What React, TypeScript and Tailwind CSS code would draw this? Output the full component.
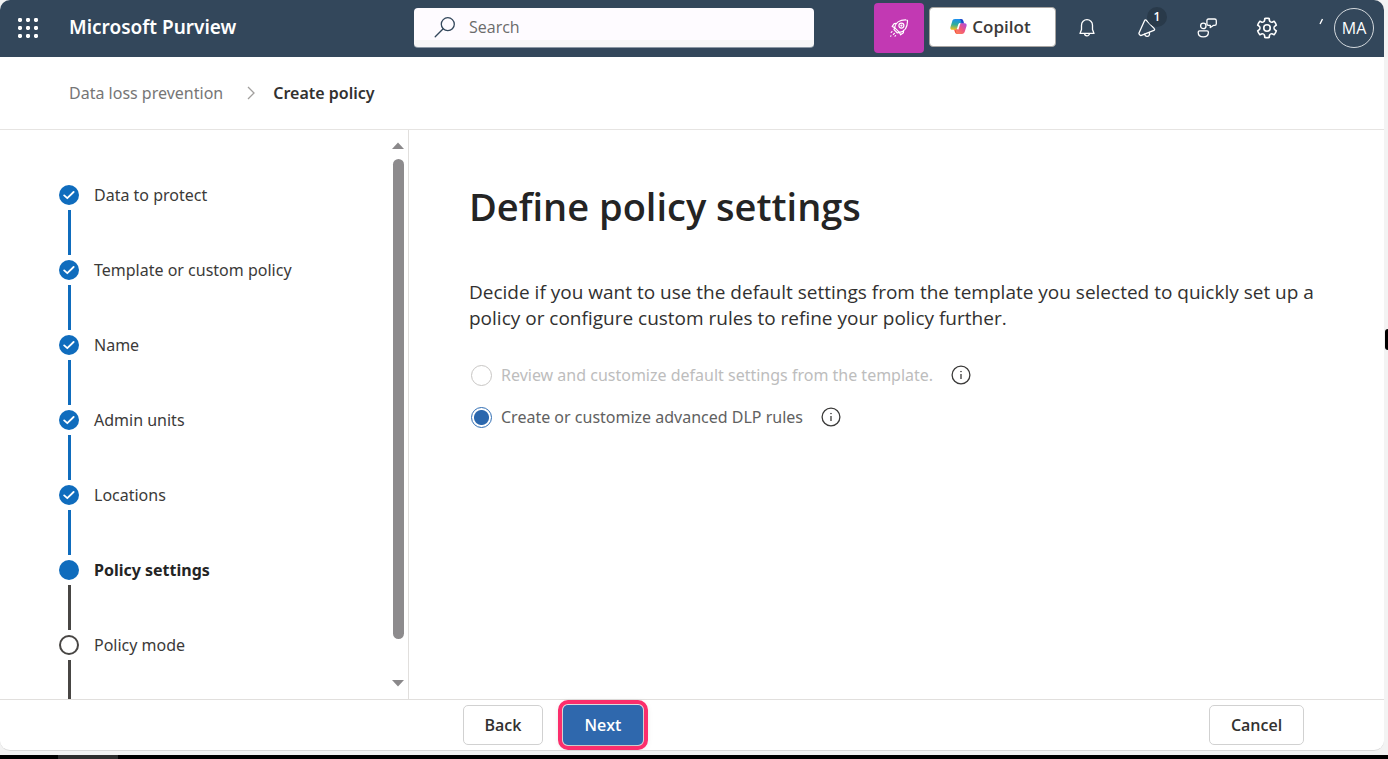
import React from "react";

type StepState = "done" | "current" | "pending";

const steps: { label: string; state: StepState }[] = [
  { label: "Data to protect", state: "done" },
  { label: "Template or custom policy", state: "done" },
  { label: "Name", state: "done" },
  { label: "Admin units", state: "done" },
  { label: "Locations", state: "done" },
  { label: "Policy settings", state: "current" },
  { label: "Policy mode", state: "pending" },
];

function WaffleIcon() {
  const spots = [2, 10, 18];
  return (
    <svg width="20" height="20" viewBox="0 0 20 20" fill="currentColor" aria-hidden="true">
      {spots.map((y) => spots.map((x) => <rect key={`${x}-${y}`} x={x - 2} y={y - 2} width="4" height="4" rx="1.4" />))}
    </svg>
  );
}

function SearchIcon() {
  return (
    <svg width="22" height="22" viewBox="0 0 22 22" fill="none" stroke="#33475b" strokeWidth="1.3" strokeLinecap="round" aria-hidden="true">
      <circle cx="13.8" cy="8.2" r="6.5" />
      <path d="M9.2 12.8 1.2 20.8" />
    </svg>
  );
}

function RocketIcon() {
  return (
    <svg width="20" height="20" viewBox="0 0 20 20" fill="none" stroke="currentColor" strokeWidth="1.2" strokeLinejoin="round" strokeLinecap="round" aria-hidden="true">
      <path d="M5.600 9.600C6.400 5 10.400 1.600 17 1.800 18.200 1.800 18.600 2.200 18.500 3.200 18.400 9.600 15 13.600 10.400 14.400Z" />
      <path d="M7.400 5.400 5.200 5.600 3.200 8.400 5.600 9.600M14.600 12.400 14.400 14.800 11.600 16.800 10.400 14.400" />
      <circle cx="12.400" cy="7.600" r="2.500" />
      <circle cx="12.400" cy="7.600" r="0.500" />
      <path d="M5.600 9.600 5 11.600 8.400 15 10.400 14.400M3 13.600 2.200 14.400M5.400 15.400 4.400 16.400M2 17.800 1.600 18.200M6.600 17.600 6 18.200" />
    </svg>
  );
}

function CopilotIcon() {
  return (
    <svg width="17" height="17" viewBox="0 0 18 18" aria-hidden="true">
      <defs>
        <linearGradient id="cp-left" x1="0.4" y1="0" x2="0.3" y2="1">
          <stop offset="0" stopColor="#1a8fef" />
          <stop offset="0.500" stopColor="#2fae9c" />
          <stop offset="1" stopColor="#f5c21b" />
        </linearGradient>
        <linearGradient id="cp-right" x1="1" y1="0" x2="0" y2="1">
          <stop offset="0" stopColor="#a64be8" />
          <stop offset="0.500" stopColor="#f0567d" />
          <stop offset="1" stopColor="#ff8a4d" />
        </linearGradient>
      </defs>
      <path d="M8 1.100H12C13.200 1.100 13.800 1.900 14.200 3.200L15 6.200H11.400Z" fill="#1b45c9" />
      <path d="M3.200 12 6.200 11.800H8L10 16.900H7.800C6.400 16.900 5.600 16 5.200 14.800L4.400 12.500Z" fill="#f04a3c" />
      <path d="M5.300 1.100H9.400C10.600 1.100 11.200 1.700 11.500 2.800L12.200 5.300H10.800C9.600 5.300 9 5.900 8.700 7L7.600 10.700C7.200 12 6.500 12.500 5.300 12.500H2.500C.8 12.500 0 11.300.500 9.500L2.300 3.600C2.800 1.900 3.700 1.100 5.300 1.100Z" fill="url(#cp-left)" />
      <path d="M12.700 16.900H8.600C7.400 16.900 6.800 16.300 6.500 15.200L5.800 12.600H7.200C8.400 12.600 9 12.100 9.300 11L10.400 7.300C10.800 6 11.500 5.500 12.700 5.500H15.500C17.200 5.500 18 6.700 17.500 8.500L15.700 14.400C15.200 16.100 14.300 16.900 12.700 16.900Z" fill="url(#cp-right)" />
    </svg>
  );
}

function BellIcon() {
  return (
    <svg width="20" height="20" viewBox="0 0 20 20" fill="none" stroke="currentColor" strokeWidth="1.300" strokeLinejoin="round" aria-hidden="true">
      <path d="M10 1.700A5.500 5.500 0 0 0 4.500 7.200V11.500L3 15.400H17L15.500 11.500V7.200A5.500 5.500 0 0 0 10 1.700Z" />
      <path d="M7.600 15.400A2.400 2.400 0 0 0 12.400 15.400" />
    </svg>
  );
}

function MegaphoneIcon() {
  return (
    <svg width="20" height="20" viewBox="0 0 20 20" fill="none" stroke="currentColor" strokeWidth="1.300" strokeLinejoin="round" strokeLinecap="round" aria-hidden="true">
      <path d="M9.300 2.200 17.300 10.600C17.900 11.200 17.600 12 16.900 12.300L4.400 17.400C3.800 17.600 3.400 17.500 3 17.100L2.300 16.300C1.900 15.900 1.800 15.400 2 14.900L7.600 2.500C8 1.800 8.700 1.600 9.300 2.200Z" />
      <path d="M7.600 16.200C8 18.800 11.700 19.300 12.500 16.600L12.300 14.300" />
    </svg>
  );
}

function FeedbackIcon() {
  return (
    <svg width="20" height="20" viewBox="0 0 20 20" fill="none" stroke="currentColor" strokeWidth="1.300" strokeLinejoin="round" aria-hidden="true">
      <circle cx="6.300" cy="7.900" r="2.700" />
      <path d="M2.600 12.900H10C10.900 12.900 11.400 13.400 11.400 14.200 11.400 17.200 9.400 18.900 6.300 18.900S1.200 17.200 1.200 14.200C1.200 13.400 1.700 12.900 2.600 12.900Z" />
      <path d="M11.500 1H17.600C18.600 1 19.300 1.700 19.300 2.700V5.700C19.300 6.700 18.600 7.400 17.600 7.400H16.300L13.300 9.600V7.400H11.500C10.500 7.400 9.900 6.700 9.900 5.700V2.700C9.900 1.700 10.500 1 11.500 1Z" />
    </svg>
  );
}

function GearIcon() {
  return (
    <svg width="26" height="26" viewBox="0 0 24 24" fill="currentColor" aria-hidden="true">
      <path d="M12.012 2.250c.734.008 1.465.093 2.182.253a.75.75 0 0 1 .582.649l.17 1.527a1.384 1.384 0 0 0 1.927 1.116l1.401-.615a.75.75 0 0 1 .85.174 9.792 9.792 0 0 1 2.204 3.792.75.75 0 0 1-.271.825l-1.242.916a1.381 1.381 0 0 0 0 2.226l1.243.915a.75.75 0 0 1 .272.826 9.797 9.797 0 0 1-2.204 3.792.75.75 0 0 1-.848.175l-1.407-.617a1.380 1.380 0 0 0-1.926 1.114l-.169 1.526a.75.75 0 0 1-.572.647 9.518 9.518 0 0 1-4.406 0 .75.75 0 0 1-.572-.647l-.168-1.524a1.382 1.382 0 0 0-1.926-1.110l-1.406.616a.75.75 0 0 1-.849-.175 9.798 9.798 0 0 1-2.204-3.796.75.75 0 0 1 .272-.826l1.243-.916a1.380 1.380 0 0 0 0-2.226l-1.243-.914a.75.75 0 0 1-.271-.826 9.793 9.793 0 0 1 2.204-3.792.75.75 0 0 1 .850-.174l1.400.615a1.387 1.387 0 0 0 1.930-1.118l.170-1.526a.75.75 0 0 1 .583-.650c.717-.159 1.450-.243 2.201-.252Zm0 1.500a9.135 9.135 0 0 0-1.354.117l-.109.977A2.886 2.886 0 0 1 6.525 7.170l-.898-.394a8.293 8.293 0 0 0-1.348 2.317l.798.587a2.881 2.881 0 0 1 0 4.643l-.799.588c.320.842.776 1.626 1.348 2.322l.905-.397a2.882 2.882 0 0 1 4.017 2.318l.110.984c.889.150 1.798.150 2.687 0l.110-.984a2.881 2.881 0 0 1 4.020-2.322l.905.396a8.296 8.296 0 0 0 1.347-2.318l-.798-.588a2.881 2.881 0 0 1 0-4.643l.796-.587a8.293 8.293 0 0 0-1.348-2.317l-.896.393a2.884 2.884 0 0 1-4.023-2.324l-.110-.976a8.988 8.988 0 0 0-1.333-.117ZM12 8.250a3.750 3.750 0 1 1 0 7.500 3.750 3.750 0 0 1 0-7.500Zm0 1.500a2.250 2.250 0 1 0 0 4.500 2.250 2.250 0 0 0 0-4.500Z" />
    </svg>
  );
}

function InfoIcon() {
  return (
    <svg width="20" height="20" viewBox="0 0 20 20" fill="none" stroke="#3b3a39" strokeWidth="1.300" aria-hidden="true">
      <circle cx="10" cy="10" r="8.900" />
      <path d="M10 9V14" />
      <circle cx="10" cy="6.600" r="0.400" fill="#3b3a39" strokeWidth="0.900" />
    </svg>
  );
}

function StepMarker({ state }: { state: StepState }) {
  if (state === "pending") {
    return <span className="size-5 shrink-0 rounded-full border-2 border-[#484644]" />;
  }
  return (
    <span className="flex size-5 shrink-0 items-center justify-center rounded-full bg-[#0f6cbd]">
      {state === "done" && (
        <svg width="12" height="12" viewBox="0 0 12 12" fill="none" stroke="white" strokeWidth="1.800" strokeLinecap="round" strokeLinejoin="round" aria-hidden="true">
          <path d="M1.200 6.400 4.300 9.200 10.600 3" />
        </svg>
      )}
    </span>
  );
}

function HeaderButton({ label, children }: { label: string; children: React.ReactNode }) {
  return (
    <button type="button" aria-label={label} className="flex h-full w-15 shrink-0 items-center justify-center">
      {children}
    </button>
  );
}

function Header() {
  return (
    <header className="flex h-[57px] shrink-0 items-center bg-[#33475b] pr-[10px] pb-0.5 text-white">
      <div className="flex w-[414px] shrink-0 items-center">
        <button type="button" aria-label="App launcher" className="ml-[18px] flex">
          <WaffleIcon />
        </button>
        <span className="ml-[31px] text-[19px] font-semibold font-['Noto_Sans',sans-serif]">Microsoft Purview</span>
      </div>
      <label className="flex h-10 w-[400px] min-w-0 items-center rounded-[4px] border-b border-[#8a97a3] bg-[linear-gradient(#fefbff_82%,#f6f6f6_82%)] pl-5">
        <SearchIcon />
        <input
          type="search"
          aria-label="Search"
          placeholder="Search"
          className="ml-[13px] min-w-0 flex-1 bg-transparent text-[16px] text-[#616161] outline-none placeholder:text-[#6b6b6b]"
        />
      </label>
      <div className="ml-auto flex h-full shrink-0 items-center">
        <button type="button" aria-label="What's new" className="flex h-[50px] w-[50px] items-center justify-center rounded-[4px] bg-[#c239b3]">
          <RocketIcon />
        </button>
        <button
          type="button"
          className="mr-px mb-0.5 ml-[5px] flex h-10 w-[127px] items-center justify-center gap-[5px] rounded-[4px] border border-[#a8a5a2] bg-white pr-1 text-[17px] font-semibold text-[#3b3a39]"
        >
          <CopilotIcon />
          Copilot
        </button>
        <HeaderButton label="Notifications">
          <BellIcon />
        </HeaderButton>
        <HeaderButton label="Announcements">
          <span className="relative flex">
            <MegaphoneIcon />
            <span className="absolute -top-[11px] left-[10px] flex size-5 items-center justify-center rounded-full bg-[#293a4a] text-[12px] font-semibold">1</span>
          </span>
        </HeaderButton>
        <HeaderButton label="Feedback">
          <FeedbackIcon />
        </HeaderButton>
        <HeaderButton label="Settings">
          <GearIcon />
        </HeaderButton>
        <svg width="6" height="8" viewBox="0 0 6 8" className="mr-[10px] mb-3 ml-[21px]" aria-hidden="true">
          <path d="M4.500 1 2 6" stroke="white" strokeWidth="1.400" />
        </svg>
        <button type="button" aria-label="Account" className="flex size-10 items-center justify-center rounded-full border border-[#d5dade] text-[16px] font-medium">
          MA
        </button>
      </div>
    </header>
  );
}

function Sidebar() {
  return (
    <aside className="flex w-[409px] shrink-0 overflow-hidden border-r border-[#e1dfdd]">
      <ol className="flex-1 overflow-hidden pt-[55px] pl-[59px]">
        {steps.map((step) => (
          <li key={step.label} className="flex h-[75px] gap-[15px]">
            <div className="flex w-5 flex-col items-center gap-[5px]">
              <StepMarker state={step.state} />
              <span className={step.state === "done" ? "h-[45px] w-[3px] bg-[#0f6cbd]" : "h-[45px] w-[3px] bg-[#484644]"} />
            </div>
            <span
              className={
                step.state === "current"
                  ? "text-[16px] leading-5 font-bold text-[#242424]"
                  : "text-[16px] leading-5 text-[#3b3a39]"
              }
            >
              {step.label}
            </span>
          </li>
        ))}
      </ol>
      <div className="flex w-5 flex-col items-center py-3" aria-hidden="true">
        <svg width="12" height="7" viewBox="0 0 12 7">
          <path d="M0 7 6 0.500 12 7Z" fill="#8a888a" />
        </svg>
        <div className="mt-[10px] mb-[41px] w-[11px] flex-1 rounded-full bg-[#8d8b8d]" />
        <svg width="12" height="7" viewBox="0 0 12 7">
          <path d="M0 0 6 6.500 12 0Z" fill="#8a888a" />
        </svg>
      </div>
    </aside>
  );
}

function RuleOption({
  id,
  label,
  disabled,
  checked,
}: {
  id: string;
  label: string;
  disabled?: boolean;
  checked?: boolean;
}) {
  return (
    <div className="flex h-6 items-center">
      <input
        id={id}
        type="radio"
        name="rule-source"
        disabled={disabled}
        defaultChecked={checked}
        className="size-[21px] shrink-0 appearance-none rounded-full border border-[#2f6db3] bg-white checked:bg-[radial-gradient(circle,#2b67ad_7px,white_8px)] disabled:border-[#c8c6c4]"
      />
      <label htmlFor={id} className={disabled ? "ml-[9px] text-[16px] text-[#bdbdbd]" : "ml-[9px] text-[16px] text-[#616161]"}>
        {label}
      </label>
      <button type="button" aria-label={`About: ${label}`} className="ml-[18px] flex">
        <InfoIcon />
      </button>
    </div>
  );
}

export default function App() {
  return (
    <div className="relative flex h-screen min-h-[600px] flex-col bg-[#f3f3f3] font-['Open_Sans',sans-serif]">
      <div className="mr-1 flex min-h-0 flex-1 flex-col overflow-hidden rounded-[10px] border-b border-[#d9d9d9] bg-white">
        <Header />
        <nav
          aria-label="Breadcrumb"
          className="flex h-[73px] shrink-0 items-center border-b border-[#e6e4e2] pl-[69px] text-[16px] font-['Noto_Sans',sans-serif]"
        >
          <a href="#dlp" className="text-[#767676]">
            Data loss prevention
          </a>
          <svg width="8" height="14" viewBox="0 0 8 14" className="mr-[18px] ml-6" fill="none" stroke="#a19f9d" strokeWidth="1.300" aria-hidden="true">
            <path d="M1 1 7 7 1 13" />
          </svg>
          <span aria-current="page" className="font-semibold text-[#323130]">
            Create policy
          </span>
        </nav>
        <div className="flex min-h-0 flex-1 font-['Noto_Sans',sans-serif]">
          <Sidebar />
          <main className="min-w-0 flex-1 overflow-hidden pt-[50px] pr-[60px] pl-[60px]">
            <h1 className="text-[38px] leading-[52px] font-semibold text-[#242424] font-['Open_Sans',sans-serif]">Define policy settings</h1>
            <p className="mt-[47px] text-[19px] leading-[26px] text-[#323130] font-['Open_Sans',sans-serif]">
              Decide if you want to use the default settings from the template you selected to quickly set up a policy or configure custom rules to refine your policy further.
            </p>
            <fieldset className="mt-8 flex flex-col gap-[18px] pl-0.5">
              <RuleOption id="default-rules" label="Review and customize default settings from the template." disabled />
              <RuleOption id="advanced-rules" label="Create or customize advanced DLP rules" checked />
            </fieldset>
          </main>
        </div>
        <footer className="flex h-[51px] shrink-0 items-center border-t border-[#e1dfdd] pr-20 pl-[463px] text-[16px] font-semibold text-[#323130]">
          <button type="button" className="h-10 w-20 rounded-[5px] border border-[#d1d1d1] bg-white">
            Back
          </button>
          <button
            type="button"
            className="ml-5 h-10 w-20 rounded-[5px] bg-[#2f68ad] text-white shadow-[0_1px_8px_rgba(0,0,0,0.4)] outline-4 outline-offset-1 outline-[#fb2e6c]"
          >
            Next
          </button>
          <button type="button" className="ml-auto h-10 w-[95px] rounded-[5px] border border-[#d1d1d1] bg-white">
            Cancel
          </button>
        </footer>
      </div>
      <div className="mt-1 h-1 shrink-0 bg-black pl-[58px]">
        <div className="h-full w-15 bg-[#2d2d2d]" />
      </div>
      <span className="absolute top-[329px] right-0 h-[21px] w-[3px] rounded-l-full bg-black" />
    </div>
  );
}
